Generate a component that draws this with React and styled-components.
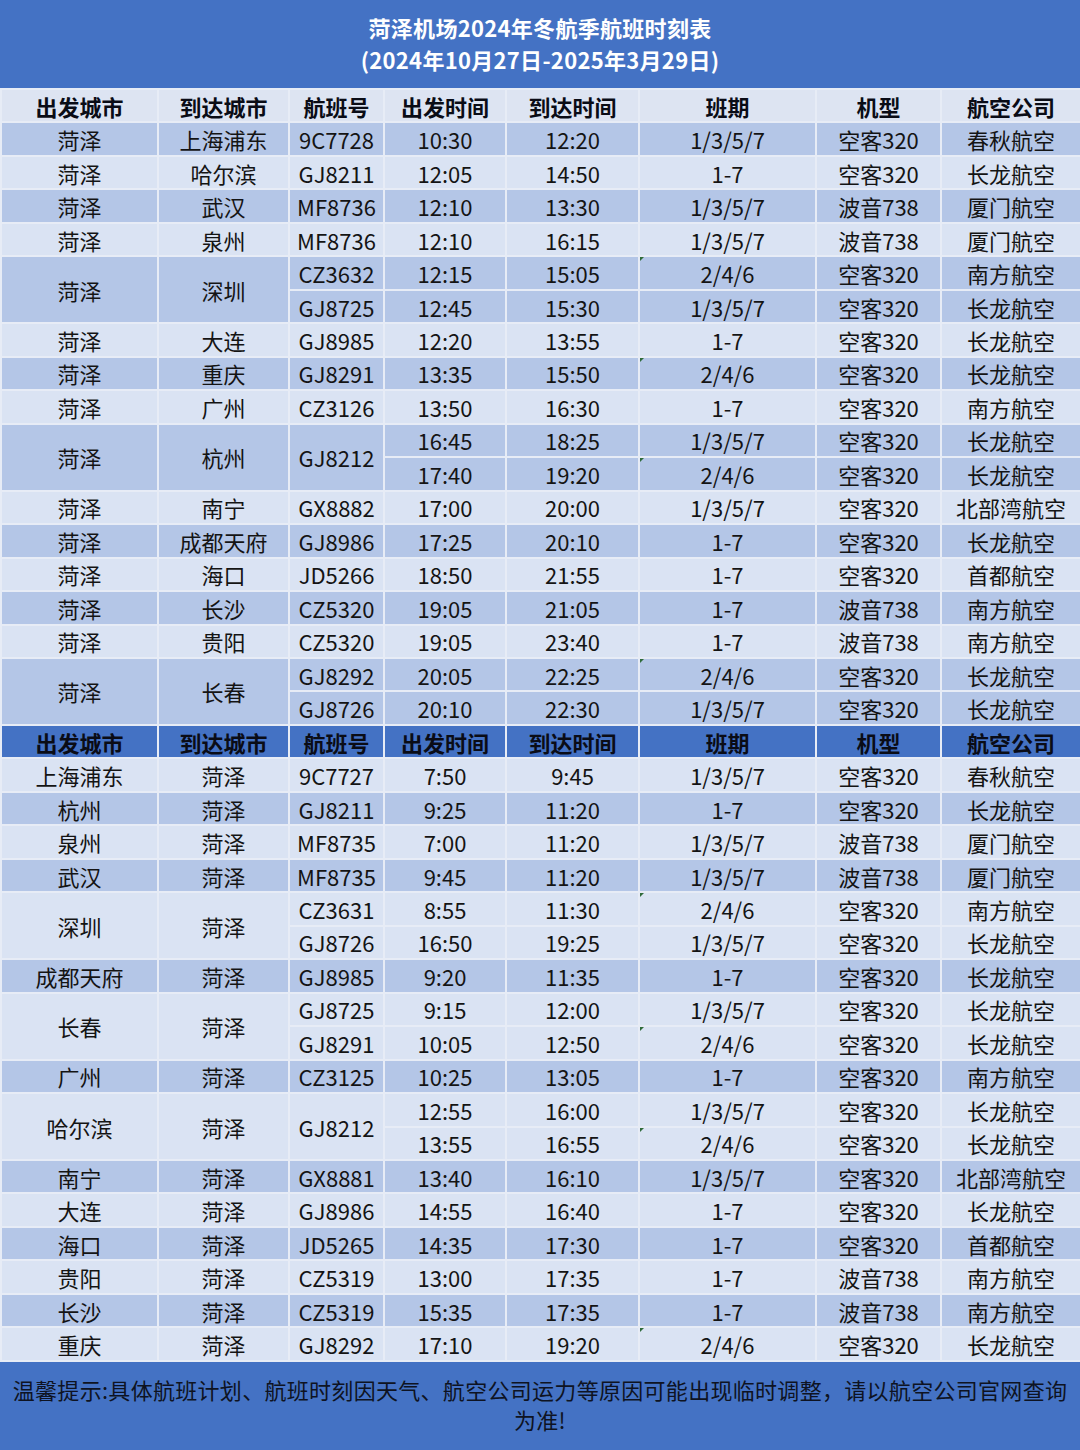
import React from 'react';
import styled, { createGlobalStyle } from 'styled-components';

const GlobalStyle = createGlobalStyle`
  html, body {
    margin: 0;
    padding: 0;
    background: #ffffff;
  }
  body {
    font-family: "Noto Sans CJK SC", "Noto Sans", sans-serif;
  }
`;

const Page = styled.div`
  width: 1080px;
  height: 1450px;
  display: flex;
  flex-direction: column;
  overflow: hidden;
`;

const TitleBand = styled.div`
  flex-shrink: 0;
  height: 88px;
  box-sizing: border-box;
  padding-top: 11px;
  background-color: #4472c4;
  color: #ffffff;
  text-align: center;
  font-size: 22px;
  font-weight: 700;
  line-height: 32px;
  letter-spacing: 0.3px;
`;

const Table = styled.table`
  flex-shrink: 0;
  width: 1080px;
  table-layout: fixed;
  border-collapse: collapse;
  color: #141414;
`;

const HeadCell = styled.th`
  height: 31.47px;
  padding: 0;
  border: 2px solid #e7ecf6;
  background-color: ${(p) => (p.$blue ? '#4472c4' : '#dde4f2')};
  color: #0a0c16;
  font-size: 22px;
  font-weight: 700;
  text-align: center;
  vertical-align: middle;
  line-height: 1;
  white-space: nowrap;
`;

const Cell = styled.td`
  position: relative;
  height: 31.47px;
  padding: 0;
  border: 2px solid #e7ecf6;
  background-color: ${(p) => (p.$dark ? '#b4c6e7' : '#dae3f3')};
  font-size: 22px;
  text-align: center;
  vertical-align: middle;
  line-height: 1;
  white-space: nowrap;

  ${(p) =>
    p.$flag &&
    `
    &::before {
      content: '';
      position: absolute;
      left: 0;
      top: 0;
      width: 0;
      height: 0;
      border-top: 4px solid #2f6b3a;
      border-right: 4px solid transparent;
    }
  `}
`;

const Footer = styled.div`
  flex: 1;
  box-sizing: border-box;
  padding: 12px 8px 0;
  background-color: #4472c4;
  color: #0e1322;
  font-size: 22px;
  line-height: 30px;
  text-align: center;
  letter-spacing: 0.3px;
`;

const widths = [157, 131, 95, 122, 133, 177, 125, 140];
const headers = ['出发城市', '到达城市', '航班号', '出发时间', '到达时间', '班期', '机型', '航空公司'];

const r = (no, dep, arr, days, type, airline) => ({ no, dep, arr, days, type, airline });

const outbound = [
  { from: '菏泽', to: '上海浦东', rows: [r('9C7728', '10:30', '12:20', '1/3/5/7', '空客320', '春秋航空')] },
  { from: '菏泽', to: '哈尔滨', rows: [r('GJ8211', '12:05', '14:50', '1-7', '空客320', '长龙航空')] },
  { from: '菏泽', to: '武汉', rows: [r('MF8736', '12:10', '13:30', '1/3/5/7', '波音738', '厦门航空')] },
  { from: '菏泽', to: '泉州', rows: [r('MF8736', '12:10', '16:15', '1/3/5/7', '波音738', '厦门航空')] },
  {
    from: '菏泽',
    to: '深圳',
    rows: [
      r('CZ3632', '12:15', '15:05', '2/4/6', '空客320', '南方航空'),
      r('GJ8725', '12:45', '15:30', '1/3/5/7', '空客320', '长龙航空'),
    ],
  },
  { from: '菏泽', to: '大连', rows: [r('GJ8985', '12:20', '13:55', '1-7', '空客320', '长龙航空')] },
  { from: '菏泽', to: '重庆', rows: [r('GJ8291', '13:35', '15:50', '2/4/6', '空客320', '长龙航空')] },
  { from: '菏泽', to: '广州', rows: [r('CZ3126', '13:50', '16:30', '1-7', '空客320', '南方航空')] },
  {
    from: '菏泽',
    to: '杭州',
    rows: [
      r('GJ8212', '16:45', '18:25', '1/3/5/7', '空客320', '长龙航空'),
      r('GJ8212', '17:40', '19:20', '2/4/6', '空客320', '长龙航空'),
    ],
  },
  { from: '菏泽', to: '南宁', rows: [r('GX8882', '17:00', '20:00', '1/3/5/7', '空客320', '北部湾航空')] },
  { from: '菏泽', to: '成都天府', rows: [r('GJ8986', '17:25', '20:10', '1-7', '空客320', '长龙航空')] },
  { from: '菏泽', to: '海口', rows: [r('JD5266', '18:50', '21:55', '1-7', '空客320', '首都航空')] },
  { from: '菏泽', to: '长沙', rows: [r('CZ5320', '19:05', '21:05', '1-7', '波音738', '南方航空')] },
  { from: '菏泽', to: '贵阳', rows: [r('CZ5320', '19:05', '23:40', '1-7', '波音738', '南方航空')] },
  {
    from: '菏泽',
    to: '长春',
    rows: [
      r('GJ8292', '20:05', '22:25', '2/4/6', '空客320', '长龙航空'),
      r('GJ8726', '20:10', '22:30', '1/3/5/7', '空客320', '长龙航空'),
    ],
  },
];

const inbound = [
  { from: '上海浦东', to: '菏泽', rows: [r('9C7727', '7:50', '9:45', '1/3/5/7', '空客320', '春秋航空')] },
  { from: '杭州', to: '菏泽', rows: [r('GJ8211', '9:25', '11:20', '1-7', '空客320', '长龙航空')] },
  { from: '泉州', to: '菏泽', rows: [r('MF8735', '7:00', '11:20', '1/3/5/7', '波音738', '厦门航空')] },
  { from: '武汉', to: '菏泽', rows: [r('MF8735', '9:45', '11:20', '1/3/5/7', '波音738', '厦门航空')] },
  {
    from: '深圳',
    to: '菏泽',
    rows: [
      r('CZ3631', '8:55', '11:30', '2/4/6', '空客320', '南方航空'),
      r('GJ8726', '16:50', '19:25', '1/3/5/7', '空客320', '长龙航空'),
    ],
  },
  { from: '成都天府', to: '菏泽', rows: [r('GJ8985', '9:20', '11:35', '1-7', '空客320', '长龙航空')] },
  {
    from: '长春',
    to: '菏泽',
    rows: [
      r('GJ8725', '9:15', '12:00', '1/3/5/7', '空客320', '长龙航空'),
      r('GJ8291', '10:05', '12:50', '2/4/6', '空客320', '长龙航空'),
    ],
  },
  { from: '广州', to: '菏泽', rows: [r('CZ3125', '10:25', '13:05', '1-7', '空客320', '南方航空')] },
  {
    from: '哈尔滨',
    to: '菏泽',
    rows: [
      r('GJ8212', '12:55', '16:00', '1/3/5/7', '空客320', '长龙航空'),
      r('GJ8212', '13:55', '16:55', '2/4/6', '空客320', '长龙航空'),
    ],
  },
  { from: '南宁', to: '菏泽', rows: [r('GX8881', '13:40', '16:10', '1/3/5/7', '空客320', '北部湾航空')] },
  { from: '大连', to: '菏泽', rows: [r('GJ8986', '14:55', '16:40', '1-7', '空客320', '长龙航空')] },
  { from: '海口', to: '菏泽', rows: [r('JD5265', '14:35', '17:30', '1-7', '空客320', '首都航空')] },
  { from: '贵阳', to: '菏泽', rows: [r('CZ5319', '13:00', '17:35', '1-7', '波音738', '南方航空')] },
  { from: '长沙', to: '菏泽', rows: [r('CZ5319', '15:35', '17:35', '1-7', '波音738', '南方航空')] },
  { from: '重庆', to: '菏泽', rows: [r('GJ8292', '17:10', '19:20', '2/4/6', '空客320', '长龙航空')] },
];

function HeaderRow({ blue }) {
  return (
    <tr>
      {headers.map((h) => (
        <HeadCell key={h} $blue={blue}>
          {h}
        </HeadCell>
      ))}
    </tr>
  );
}

function Group({ group, dark }) {
  const span = group.rows.length;
  const sameNo = group.rows.every((row) => row.no === group.rows[0].no);
  return group.rows.map((row, i) => (
    <tr key={i}>
      {i === 0 && (
        <>
          <Cell rowSpan={span} $dark={dark}>{group.from}</Cell>
          <Cell rowSpan={span} $dark={dark}>{group.to}</Cell>
          {sameNo && <Cell rowSpan={span} $dark={dark}>{row.no}</Cell>}
        </>
      )}
      {!sameNo && <Cell $dark={dark}>{row.no}</Cell>}
      <Cell $dark={dark}>{row.dep}</Cell>
      <Cell $dark={dark}>{row.arr}</Cell>
      <Cell $dark={dark} $flag={row.days === '2/4/6'}>{row.days}</Cell>
      <Cell $dark={dark}>{row.type}</Cell>
      <Cell $dark={dark}>{row.airline}</Cell>
    </tr>
  ));
}

export default function App() {
  return (
    <Page>
      <GlobalStyle />
      <TitleBand>
        <div>菏泽机场2024年冬航季航班时刻表</div>
        <div>(2024年10月27日-2025年3月29日)</div>
      </TitleBand>
      <Table>
        <colgroup>
          {widths.map((w, i) => (
            <col key={i} style={{ width: w }} />
          ))}
        </colgroup>
        <tbody>
          <HeaderRow />
          {outbound.map((g, i) => (
            <Group key={'o' + i} group={g} dark={i % 2 === 0} />
          ))}
          <HeaderRow blue />
          {inbound.map((g, i) => (
            <Group key={'i' + i} group={g} dark={i % 2 === 1} />
          ))}
        </tbody>
      </Table>
      <Footer>
        温馨提示:具体航班计划、航班时刻因天气、航空公司运力等原因可能出现临时调整，请以航空公司官网查询为准!
      </Footer>
    </Page>
  );
}
